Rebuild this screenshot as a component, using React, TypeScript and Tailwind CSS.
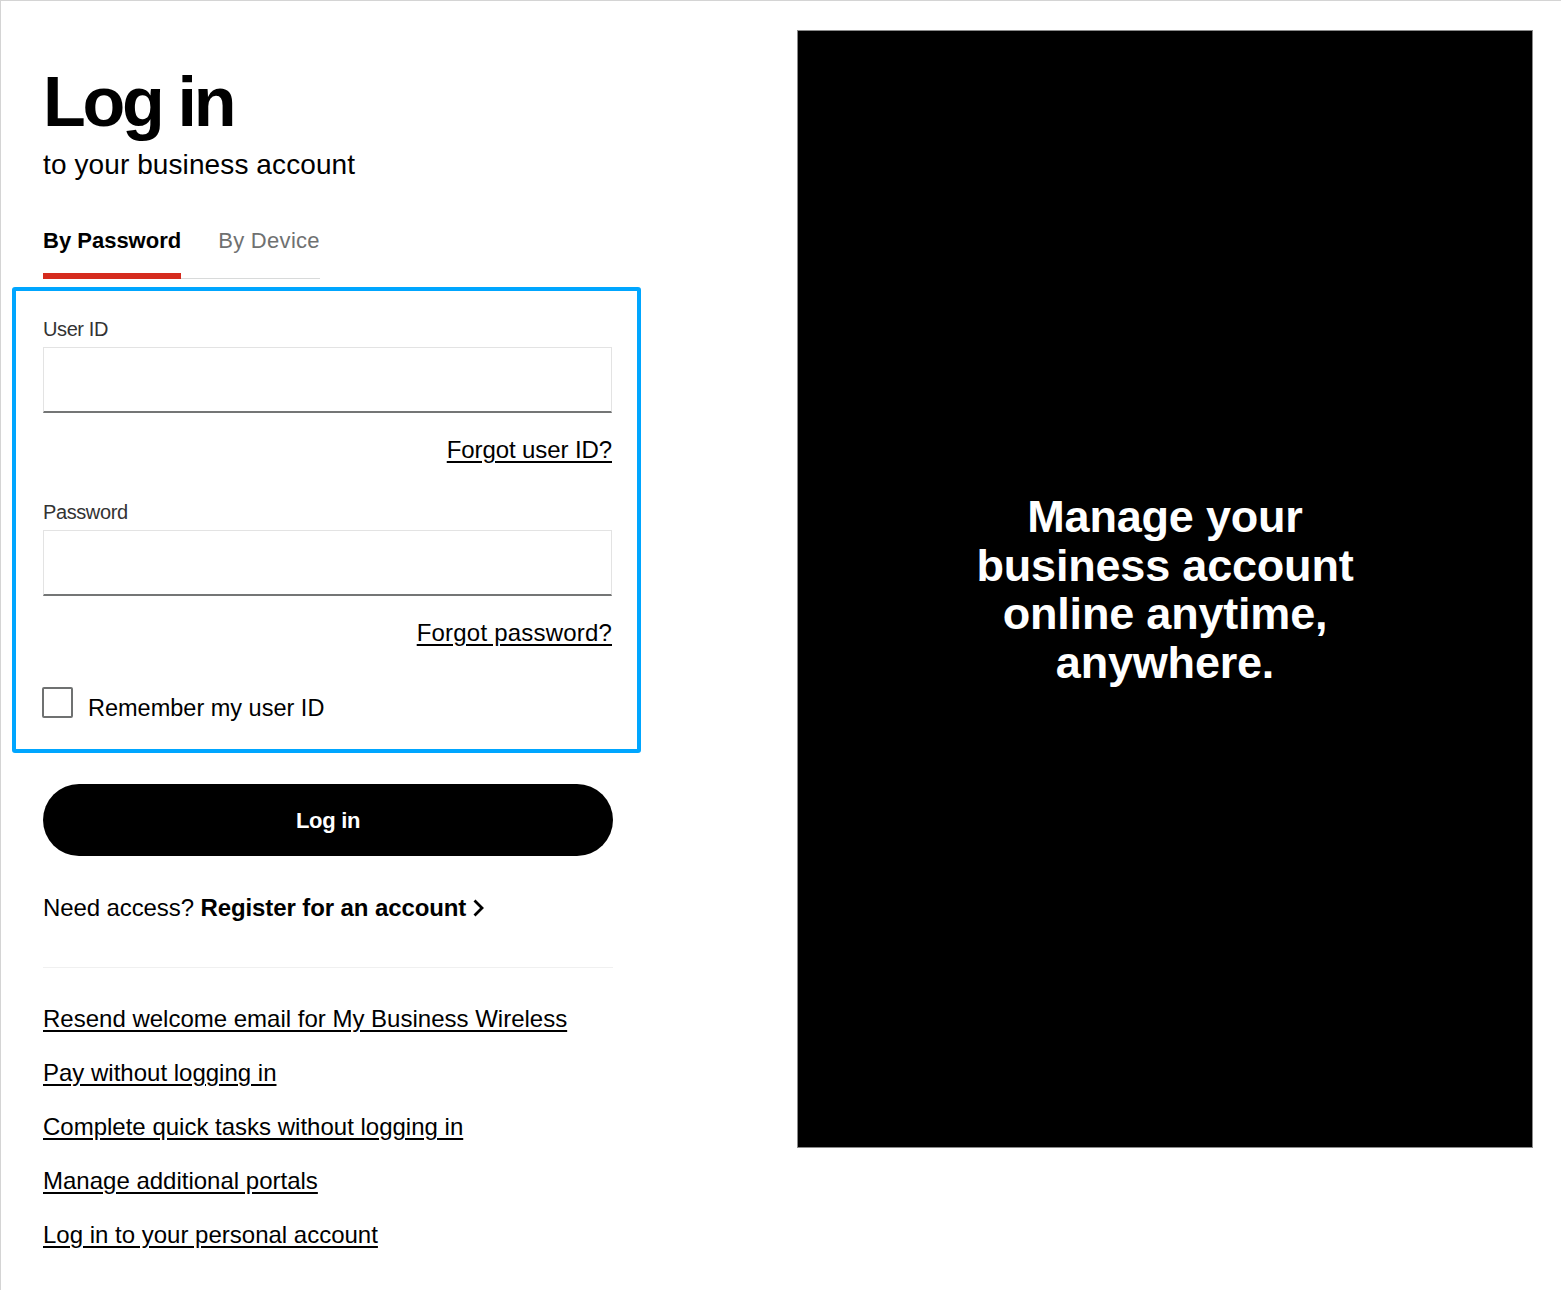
import React from "react";

const font = { fontFamily: '"Liberation Sans", Arial, sans-serif' };

export default function App() {
  const links = [
    "Resend welcome email for My Business Wireless",
    "Pay without logging in",
    "Complete quick tasks without logging in",
    "Manage additional portals",
    "Log in to your personal account",
  ];
  return (
    <div
      className="flex h-[1290px] w-[1561px] border-t border-l border-[#d4d4d4] bg-white text-black font-['Liberation_Sans',Arial,sans-serif]"
    >
      {/* Left column */}
      <div className="w-[796px] shrink-0 pl-[42px] pt-[66px]">
        <h1 className="text-[70px] leading-[70px] font-bold tracking-[-3.3px]">Log in</h1>
        <p className="mt-[12px] text-[28px] leading-[32px] tracking-[0.1px]">to your business account</p>

        {/* Tabs */}
        <div className="mt-[47px] flex items-end">
          <div className="border-b-[6px] border-[#d52b1e] pb-[19px]">
            <span className="block text-[22px] leading-[26px] font-bold">By Password</span>
          </div>
          <div className="border-b border-[#d8dada] pb-[24px] pl-[37px]">
            <span className="block text-[22px] leading-[26px] text-[#6f7171] tracking-[0.3px]">By Device</span>
          </div>
        </div>

        {/* Highlighted form */}
        <div className="mt-[8px] -ml-[31px] w-[629px] rounded-[3px] border-4 border-[#00a6ff] pl-[27px] pr-[25px] pt-[26px] pb-[27px]">
          <label className="block text-[20px] leading-[24px] text-[#333] tracking-[-0.4px]">User ID</label>
          <div className="mt-[6px] h-[66px] w-full border border-[#e3e3e3] border-b-2 border-b-[#747676]" />
          <div className="mt-[23px] flex justify-end">
            <a className="text-[24px] leading-[28px] underline underline-offset-[3px] tracking-[-0.1px]">Forgot user ID?</a>
          </div>

          <label className="mt-[36px] block text-[20px] leading-[24px] text-[#333] tracking-[-0.4px]">Password</label>
          <div className="mt-[6px] h-[66px] w-full border border-[#e3e3e3] border-b-2 border-b-[#747676]" />
          <div className="mt-[23px] flex justify-end">
            <a className="text-[24px] leading-[28px] underline underline-offset-[3px] tracking-[0.2px]">Forgot password?</a>
          </div>

          <div className="mt-[40px] flex items-start gap-[15px]">
            <div className="h-[31px] w-[31px] -ml-[1px] rounded-[2px] border-2 border-[#6f7171] bg-white" />
            <span className="mt-[8px] text-[23.5px] leading-[27px] tracking-[0px]">Remember my user ID</span>
          </div>
        </div>

        {/* Button */}
        <button className="mt-[31px] flex h-[72px] w-[570px] items-center justify-center rounded-full bg-black text-[22px] font-bold text-white tracking-[-0.3px]">
          Log in
        </button>

        <div className="mt-[38px] flex items-center text-[24px] leading-[28px] tracking-[-0.1px]">
          <span>Need access?&nbsp;</span>
          <span className="font-bold">Register for an account</span>
          <svg className="ml-[6px]" width="13" height="20" viewBox="0 0 13 20" fill="none">
            <path d="M2.5 2.5 L10 10 L2.5 17.5" stroke="#000" strokeWidth="2.8" />
          </svg>
        </div>

        <div className="mt-[45px] h-px w-[570px] bg-[#f0f0f0]" />

        <div className="mt-[37px] flex flex-col items-start gap-[26px]">
          {links.map((l) => (
            <a key={l} className="text-[24px] leading-[28px] underline underline-offset-[3px] tracking-[0px]">
              {l}
            </a>
          ))}
        </div>
      </div>

      {/* Right panel */}
      <div className="mt-[29px] flex h-[1118px] w-[736px] shrink-0 items-center justify-center border border-[#8a8a8a] bg-black">
        <p className="pt-[2px] text-center text-[45px] leading-[48.5px] font-bold text-white tracking-[-0.2px]" style={font}>
          Manage your
          <br />
          business account
          <br />
          online anytime,
          <br />
          anywhere.
        </p>
      </div>
    </div>
  );
}
